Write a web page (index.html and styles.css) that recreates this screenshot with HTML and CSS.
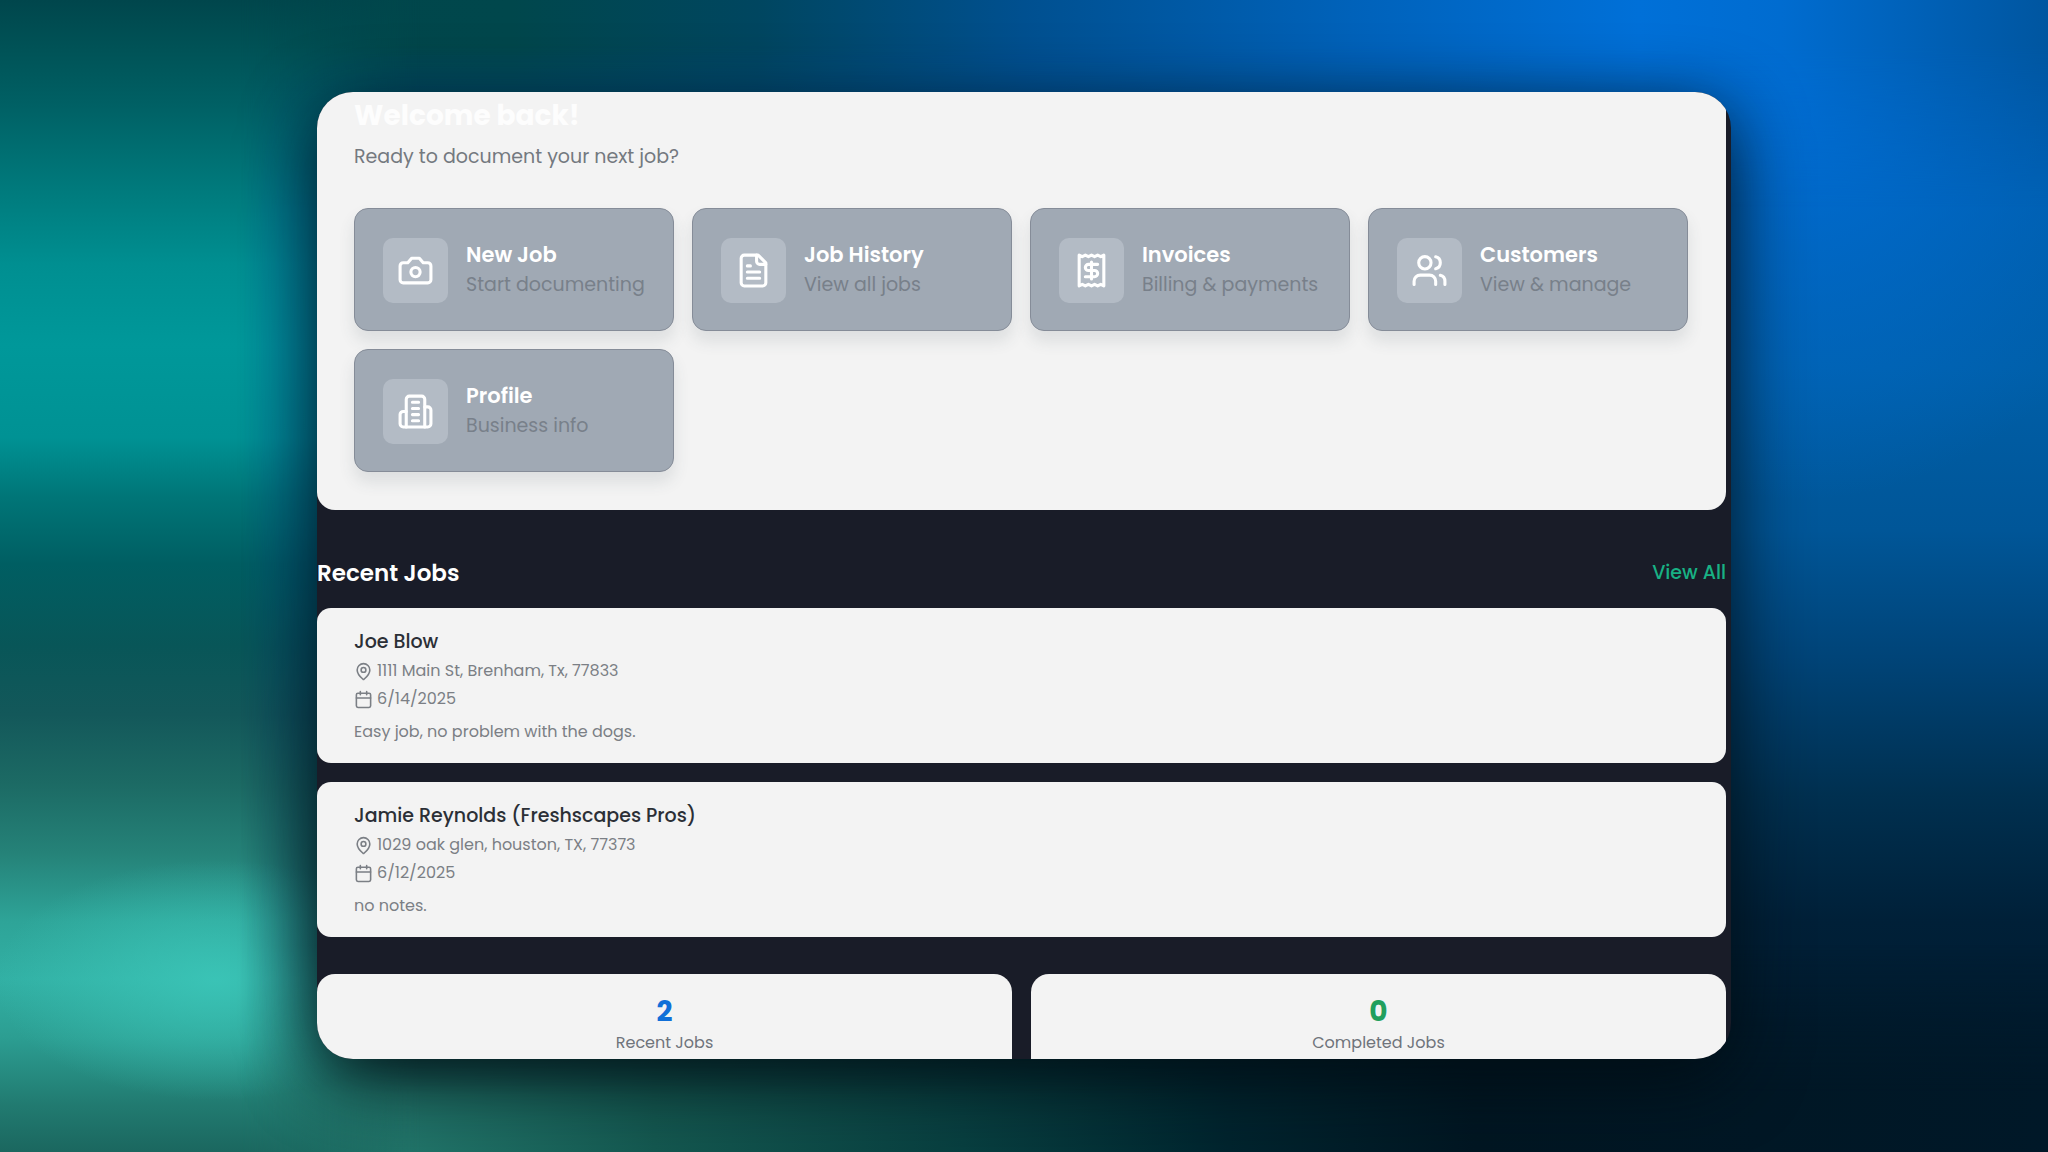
FILE: index.html
```html
<!DOCTYPE html>
<html lang="en">
<head>
<meta charset="utf-8">
<meta name="viewport" content="width=device-width, initial-scale=1">
<title>Dashboard</title>
<link rel="stylesheet" href="styles.css">
</head>
<body>
<main class="panel">
  <section class="hero">
    <h1 class="hero-title">Welcome back!</h1>
    <p class="hero-sub">Ready to document your next job?</p>
    <nav class="actions">
      <a class="action" href="#new-job">
        <span class="action-icon"><svg class="icon" viewBox="0 0 24 24"><path d="M14.5 4h-5L7 7H4a2 2 0 0 0-2 2v9a2 2 0 0 0 2 2h16a2 2 0 0 0 2-2V9a2 2 0 0 0-2-2h-3l-2.500-3z"/><circle cx="12" cy="13" r="3"/></svg></span>
        <span class="action-text"><strong class="action-title">New Job</strong><span class="action-sub">Start documenting</span></span>
      </a>
      <a class="action" href="#history">
        <span class="action-icon"><svg class="icon" viewBox="0 0 24 24"><path d="M15 2H6a2 2 0 0 0-2 2v16a2 2 0 0 0 2 2h12a2 2 0 0 0 2-2V7Z"/><path d="M14 2v4a2 2 0 0 0 2 2h4M10 9H8M16 13H8M16 17H8"/></svg></span>
        <span class="action-text"><strong class="action-title">Job History</strong><span class="action-sub">View all jobs</span></span>
      </a>
      <a class="action" href="#invoices">
        <span class="action-icon"><svg class="icon" viewBox="0 0 24 24"><path d="M4 2v20l2-1 2 1 2-1 2 1 2-1 2 1 2-1 2 1V2l-2 1-2-1-2 1-2-1-2 1-2-1-2 1Z"/><path d="M16 8h-6a2 2 0 1 0 0 4h4a2 2 0 1 1 0 4H8M12 17.500v-11"/></svg></span>
        <span class="action-text"><strong class="action-title">Invoices</strong><span class="action-sub">Billing &amp; payments</span></span>
      </a>
      <a class="action" href="#customers">
        <span class="action-icon"><svg class="icon" viewBox="0 0 24 24"><path d="M16 21v-2a4 4 0 0 0-4-4H6a4 4 0 0 0-4 4v2"/><circle cx="9" cy="7" r="4"/><path d="M22 21v-2a4 4 0 0 0-3-3.870M16 3.130a4 4 0 0 1 0 7.750"/></svg></span>
        <span class="action-text"><strong class="action-title">Customers</strong><span class="action-sub">View &amp; manage</span></span>
      </a>
      <a class="action" href="#profile">
        <span class="action-icon"><svg class="icon" viewBox="0 0 24 24"><path d="M6 22V4a2 2 0 0 1 2-2h8a2 2 0 0 1 2 2v18Z"/><path d="M6 12H4a2 2 0 0 0-2 2v6a2 2 0 0 0 2 2h2M18 9h2a2 2 0 0 1 2 2v9a2 2 0 0 1-2 2h-2M10 6h4M10 10h4M10 14h4M10 18h4"/></svg></span>
        <span class="action-text"><strong class="action-title">Profile</strong><span class="action-sub">Business info</span></span>
      </a>
    </nav>
  </section>

  <section class="recent">
    <header class="recent-head">
      <h2 class="recent-title">Recent Jobs</h2>
      <a class="view-all" href="#all">View All</a>
    </header>
    <article class="job">
      <h3 class="job-name">Joe Blow</h3>
      <p class="job-line"><svg class="icon-small" viewBox="0 0 24 24"><path d="M20 10c0 5-5.500 10.200-7.400 11.800a1 1 0 0 1-1.200 0C9.500 20.200 4 15 4 10a8 8 0 0 1 16 0"/><circle cx="12" cy="10" r="3"/></svg>1111 Main St, Brenham, Tx, 77833</p>
      <p class="job-line"><svg class="icon-small" viewBox="0 0 24 24"><path d="M8 2v4M16 2v4M3 10h18"/><rect x="3" y="4" width="18" height="18" rx="2"/></svg>6/14/2025</p>
      <p class="job-note">Easy job, no problem with the dogs.</p>
    </article>
    <article class="job">
      <h3 class="job-name">Jamie Reynolds (Freshscapes Pros)</h3>
      <p class="job-line"><svg class="icon-small" viewBox="0 0 24 24"><path d="M20 10c0 5-5.500 10.200-7.400 11.800a1 1 0 0 1-1.200 0C9.500 20.200 4 15 4 10a8 8 0 0 1 16 0"/><circle cx="12" cy="10" r="3"/></svg>1029 oak glen, houston, TX, 77373</p>
      <p class="job-line"><svg class="icon-small" viewBox="0 0 24 24"><path d="M8 2v4M16 2v4M3 10h18"/><rect x="3" y="4" width="18" height="18" rx="2"/></svg>6/12/2025</p>
      <p class="job-note">no notes.</p>
    </article>
  </section>

  <section class="stats">
    <div class="stat"><strong class="stat-value">2</strong><span class="stat-label">Recent Jobs</span></div>
    <div class="stat"><strong class="stat-value stat-value-done">0</strong><span class="stat-label">Completed Jobs</span></div>
  </section>
</main>
</body>
</html>
```
FILE: styles.css
```css
* { box-sizing: border-box; }

h1, h2, h3, p { margin: 0; }

body {
  position: relative;
  z-index: 0;
  margin: 0;
  min-height: 100vh;
  padding: 92px 317px 93px;
  font-family: Poppins, Inter, sans-serif;
  background:
    radial-gradient(ellipse 380px 420px at 1800px 80px, rgba(0, 112, 220, 0.9) 0%, rgba(0, 108, 210, 0.6) 45%, rgba(0, 100, 180, 0) 100%),
    linear-gradient(180deg, #0059a6 0%, #005fa8 32%, #005698 46%, #004478 57%, #003050 69%, #002038 80%, #001828 100%);
}

/* Colour bands along the top and bottom edges */
body::before {
  content: "";
  position: absolute;
  inset: 0;
  z-index: -2;
  background:
    linear-gradient(90deg, #00464a 0%, #00474c 25%, #004660 37%, #005090 50%, #0062ba 66%, #0070d8 80%, #006cd0 87%, #0056a0 100%) 0 0 / 100% 50% no-repeat,
    linear-gradient(90deg, #1b6a62 0%, #217469 20%, #145850 32%, #083f40 47%, #00242e 60%, #001622 72%, #001828 100%) 0 100% / 100% 50% no-repeat;
  -webkit-mask-image: linear-gradient(180deg, #000 0%, #000 4%, transparent 18%, transparent 82%, #000 95%);
  mask-image: linear-gradient(180deg, #000 0%, #000 4%, transparent 18%, transparent 82%, #000 95%);
}

/* Teal glow down the left edge */
body::after {
  content: "";
  position: absolute;
  inset: 0 auto 0 0;
  z-index: -2;
  width: 420px;
  background:
    radial-gradient(ellipse 220px 120px at 215px 980px, rgba(60, 200, 186, 0.8), rgba(56, 196, 180, 0)),
    linear-gradient(180deg, #00464c 0%, #005256 4%, #006064 9%, #007c7e 17%, #008f91 23%, #00989a 30%, #009294 38%, #007678 43%, #005e62 49%, #085658 56%, #13585a 62%, #1c6a64 68%, #258278 74%, #2ea498 80%, #32b0a4 85%, #2c9e92 90%, #217a70 96%, #1b675f 100%);
  -webkit-mask-image: linear-gradient(90deg, #000 0, #000 240px, transparent 420px);
  mask-image: linear-gradient(90deg, #000 0, #000 240px, transparent 420px);
}

.panel {
  overflow: hidden;
  padding-right: 5px;
  border-radius: 36px;
  background: #191c28;
  box-shadow: 0 18px 72px 0 rgba(0, 12, 18, 0.9);
}

.hero {
  padding: 5px 38px 38px 37px;
  border-radius: 0 0 18px 18px;
  background: #f3f3f3;
}

.hero-title {
  font-size: 28px;
  line-height: 38px;
  font-weight: 700;
  color: #fdfdfd;
}

.hero-sub {
  margin-top: 8px;
  font-size: 19px;
  line-height: 28px;
  color: #74797f;
}

.actions {
  display: grid;
  grid-template-columns: repeat(4, 1fr);
  gap: 18px;
  margin-top: 37px;
}

.action {
  display: flex;
  align-items: center;
  gap: 18px;
  height: 123px;
  padding: 1px 28px 0;
  border: 1px solid #858c98;
  border-radius: 14px;
  background: #a0a9b4;
  box-shadow: 0 10px 16px rgba(60, 70, 80, 0.12);
  text-decoration: none;
  white-space: nowrap;
}

.action-icon {
  display: flex;
  flex: none;
  align-items: center;
  justify-content: center;
  width: 65px;
  height: 65px;
  border-radius: 10px;
  background: #b3bbc5;
}

.icon, .icon-small {
  flex: none;
  fill: none;
  stroke: currentColor;
  stroke-width: 2;
  stroke-linecap: round;
  stroke-linejoin: round;
}

.icon {
  width: 37px;
  height: 37px;
  color: #fff;
}

.action-text { display: flex; flex-direction: column; }

.action-title {
  font-size: 21px;
  line-height: 30px;
  font-weight: 600;
  color: #fff;
}

.action-sub {
  font-size: 19px;
  line-height: 30px;
  color: #78808a;
}

.recent {
  display: grid;
  gap: 19px;
}

.recent-head {
  display: flex;
  align-items: center;
  justify-content: space-between;
  height: 79px;
  padding-top: 47px;
}

.recent-title {
  font-size: 23px;
  line-height: 32px;
  font-weight: 600;
  color: #fff;
}

.view-all {
  font-size: 19px;
  line-height: 32px;
  font-weight: 500;
  color: #18b184;
  text-decoration: none;
}

.job {
  height: 155px;
  padding: 19px 37px;
  border-radius: 14px;
  background: #f3f3f3;
  font-size: 16px;
  line-height: 28px;
  color: #7b7f85;
}

.job-name {
  font-size: 19px;
  line-height: 30px;
  font-weight: 500;
  color: #2b2f36;
}

.job-line {
  display: flex;
  align-items: center;
  gap: 4px;
}

.job-note { margin-top: 5px; }

.icon-small { width: 19px; height: 19px; }

.stats {
  display: grid;
  grid-template-columns: 1fr 1fr;
  gap: 19px;
  margin-top: 37px;
}

.stat {
  display: flex;
  flex-direction: column;
  align-items: center;
  padding: 20px 19px 3px;
  border-radius: 18px 18px 0 0;
  background: #f3f3f3;
}

.stat-value {
  font-size: 28px;
  line-height: 36px;
  font-weight: 700;
  color: #106fd8;
}

.stat-value-done { color: #219f5d; }

.stat-label {
  font-size: 16px;
  line-height: 26px;
  color: #6f747b;
}
```
